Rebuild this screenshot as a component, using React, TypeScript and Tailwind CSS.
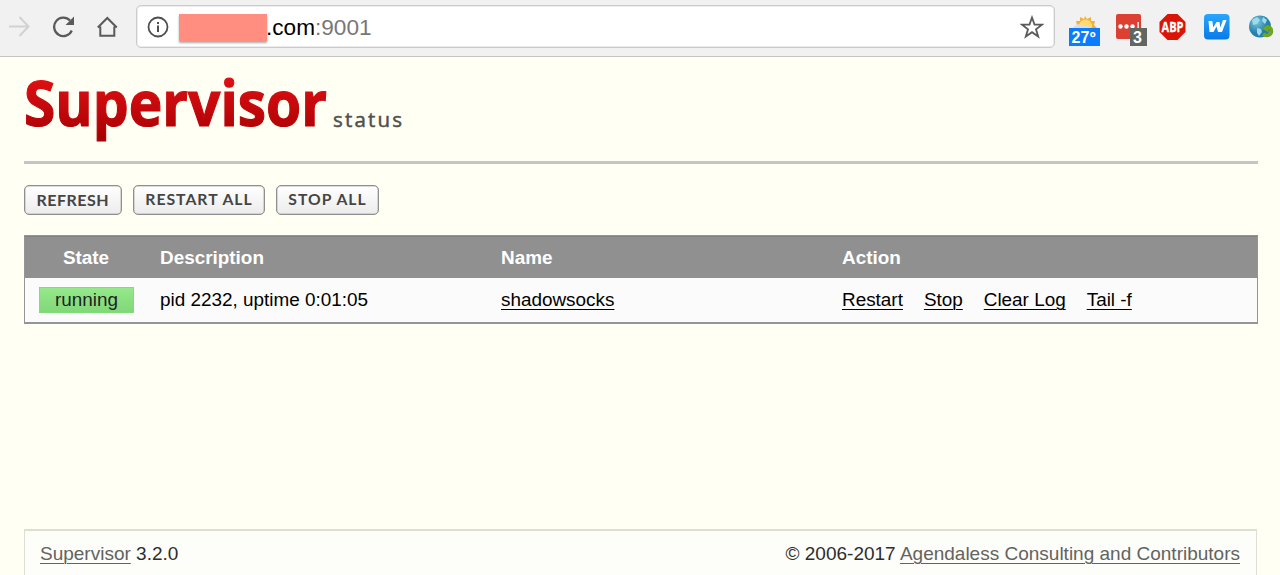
import React from "react";

const nav = "h-6 shrink-0";

function Toolbar() {
  return (
    <header className="flex h-[57px] shrink-0 items-start border-b border-[#c4c4c4] bg-[#f1f1f1]">
      <div className="flex w-[136px] shrink-0 pt-[15px]">
        <svg className={`${nav} w-[52px]`} viewBox="0 0 52 24" fill="none" stroke="#d2d2d2" strokeWidth="2">
          <path d="M9 11.500h19M19.500 2l9 9.500-9 9.500" />
        </svg>
        <svg className={`${nav} w-6`} viewBox="0 0 24 24" fill="none">
          <path d="M19.800 15.500A9.200 9.200 0 1 1 18 5.500" stroke="#5a5a5a" strokeWidth="2.200" />
          <path d="M22 1.500v8.500h-8.500z" fill="#5a5a5a" />
        </svg>
        <svg className={`${nav} ml-5 w-6`} viewBox="0 0 24 24" fill="none" stroke="#5a5a5a" strokeWidth="2">
          <path d="M1.800 12.500L11.300 3l9.500 9.500M4.300 11.500v9.300h14v-9.300" />
        </svg>
      </div>
      <div className="mt-[5px] flex h-[43px] w-[919px] shrink-0 items-center rounded-[5px] border border-[#cbcbcb] bg-white pl-[10px] shadow-[inset_0_0_0_0.5px_#dadada]">
        <svg className="size-6 shrink-0" viewBox="0 0 24 24" fill="none">
          <circle cx="11" cy="12" r="9.500" stroke="#4e4e4e" strokeWidth="1.800" />
          <path d="M11 10.500V17M11 7v2" stroke="#4e4e4e" strokeWidth="2" />
        </svg>
        <span className="mt-[2px] ml-[8px] h-[27px] w-[88px] shrink-0 bg-[#ff8d80] shadow-[0_2px_2px_#aaa]" />
        <span className="-ml-px pt-[2px] font-['Liberation_Sans',Arial,sans-serif] text-[22.6px] leading-[30px] text-black">
          .com<span className="text-[#777]">:9001</span>
        </span>
        <svg className="mr-[10px] ml-auto size-6 shrink-0" viewBox="0 0 24 24" fill="none" stroke="#5a5a5a" strokeWidth="1.800">
          <path d="M12 2.500l2.500 7 7.500.2-6 4.600 2.200 7.200L12 17.200 5.800 21.500 8 14.300 2 9.700l7.500-.2z" />
        </svg>
      </div>
      <Extensions />
    </header>
  );
}

function Extensions() {
  return (
    <svg className="h-14 w-[225px] shrink-0 font-['Liberation_Sans',Arial,sans-serif]" viewBox="1055 0 225 56">
      <defs>
        <linearGradient id="blue" x2="0" y2="1">
          <stop stopColor="#28a6ff" />
          <stop offset="1" stopColor="#087ae8" />
        </linearGradient>
        <radialGradient id="globe" cx=".35" cy=".3">
          <stop stopColor="#7cc5de" />
          <stop offset="1" stopColor="#267fab" />
        </radialGradient>
      </defs>
      <path d="M1085 16l2 3 4-2 0 4 4 0-1 4 3 3h-24l4-3-1-4 4 0 0-4 4 2z" fill="#f2b03c" />
      <circle cx="1085.500" cy="26" r="6.500" fill="#ffdc72" />
      <path d="M1074 29c0-5 6-6 8-3 4-2 7 0 7 3z" fill="#ddd" />
      <path d="M1069 28h31v18h-31z" fill="#0b7cff" />
      <text x="1071.500" y="43" fontSize="16" fontWeight="700" fill="#fff" textLength="24">27º</text>
      <rect x="1116" y="14" width="25" height="25" rx="2" fill="#dc4032" />
      <g fill="#fff">
        <circle cx="1120.500" cy="26.500" r="2.200" />
        <circle cx="1126.500" cy="26.500" r="2.200" />
        <circle cx="1132.500" cy="26.500" r="2.200" />
        <path d="M1137.500 22h1.300v7h-1.300z" />
      </g>
      <path d="M1130 28h17v18h-17z" fill="#626661" />
      <text x="1133" y="43" fontSize="16" fontWeight="700" fill="#fff">3</text>
      <path d="M1167.500 14h10l8 8v10l-8 8h-10l-8-8V22z" fill="#db1505" />
      <text x="1161.500" y="32" fontSize="14" fontWeight="700" fill="#fff" stroke="#fff" strokeWidth=".3" textLength="22" lengthAdjust="spacingAndGlyphs" className="font-['Open_Sans',sans-serif]">ABP</text>
      <rect x="1204" y="14" width="25.500" height="25.500" rx="4" fill="url(#blue)" />
      <path d="M1208.500 21h3.800l1 6.500 3.200-5.500h3l.8 5.500 2.700-7.500h3.500l-4.500 12h-4l-1.500-5.500-3 5.500h-4z" fill="#fff" />
      <circle cx="1260" cy="26.500" r="11" fill="url(#globe)" />
      <path d="M1252 20l5-3 3 3-3 4-4 1zm11-3l4 3-2 4-3-3zm-6 11l4 1 1 3-3 4-2-3z" fill="#9bdbea" />
      <path d="M1263 34c4 3 8.500 1 8.500-3 0-3-2-4-4.500-3.500" fill="none" stroke="#72a51e" strokeWidth="3.500" />
      <path d="M1262 28.500l6.500-4v8z" fill="#72a51e" />
    </svg>
  );
}

function Logo() {
  return (
    <svg className="block h-[104px] w-[400px]" viewBox="24 57 400 104" role="img">
      <defs>
        <linearGradient id="red" gradientUnits="userSpaceOnUse" x1="0" y1="80" x2="0" y2="138">
          <stop stopColor="#dc1012" />
          <stop offset="1" stopColor="#a90004" />
        </linearGradient>
      </defs>
      <text x="24" y="125.500" fontSize="62.500" fontWeight="700" fill="url(#red)" stroke="url(#red)" strokeWidth="1.200" textLength="303" lengthAdjust="spacingAndGlyphs" className="font-['Open_Sans','Noto_Sans',sans-serif]">Supervisor</text>
      <text x="333" y="127" fontSize="20.500" fill="#50504c" stroke="#50504c" strokeWidth=".5" textLength="69" className="font-['Open_Sans','Noto_Sans',sans-serif]">status</text>
    </svg>
  );
}

function ActionButton({ label, box, width }: { label: string; box: string; width: number }) {
  return (
    <button className={`flex h-[30px] items-center justify-center rounded-[5px] border-[1.5px] border-[#8f8f8d] bg-linear-to-b from-white to-[#ececec] shadow-[inset_0_0_0_0.5px_#b5b5b3] ${box}`}>
      <svg className="h-5 w-full" viewBox={`0 0 ${width + 24} 20`}>
        <text x="11.500" y="15.500" fontSize="16" fontWeight="700" fill="#454543" textLength={width} className="font-[Lato,sans-serif]">{label}</text>
      </svg>
    </button>
  );
}

const columns = "grid grid-cols-[120px_341px_341px_1fr] items-center px-[15px]";
const link = "underline decoration-1 underline-offset-[3px]";

export default function App() {
  return (
    <div className="flex h-[575px] w-[1280px] flex-col overflow-hidden bg-[#fffff3] font-['Liberation_Sans',Arial,sans-serif] text-[18.9px] leading-6 text-[#111]">
      <Toolbar />
      <main className="flex min-h-0 flex-1 flex-col pr-[22px] pl-6">
        <div className="h-[107px] shrink-0 border-b-3 border-[#c5c5c5]">
          <Logo />
        </div>
        <div className="mt-[21px] flex shrink-0 gap-[11px]">
          <ActionButton label="REFRESH" box="w-[98px]" width={72} />
          <ActionButton label="RESTART ALL" box="w-[132px]" width={108} />
          <ActionButton label="STOP ALL" box="w-[103px]" width={79} />
        </div>
        <section className="mt-5 h-[89px] shrink-0 border border-b-2 border-[#959595] bg-[#fbfbfb]">
          <div className={`${columns} h-[42px] border-t border-[#828282] bg-[#909090] font-bold text-white`}>
            <span className="-ml-px w-[94px] text-center">State</span>
            <span>Description</span>
            <span>Name</span>
            <span>Action</span>
          </div>
          <div className={`${columns} h-[44px] text-black`}>
            <span className="-ml-px h-[26px] w-[95px] border border-[#82dc79] bg-linear-to-b from-[#94e98b] to-[#81d878] text-center text-[#222]">running</span>
            <span>pid 2232, uptime 0:01:05</span>
            <a className={link}>shadowsocks</a>
            <span className="flex gap-[21px]">
              <a className={link}>Restart</a>
              <a className={link}>Stop</a>
              <a className={link}>Clear Log</a>
              <a className={link}>Tail -f</a>
            </span>
          </div>
        </section>
        <footer className="mt-auto mr-px flex h-[46px] shrink-0 justify-between border border-t-2 border-b-0 border-[#deded5] bg-[#fdfef9] pt-[11px] pr-4 pl-[15px] text-[19px] text-[#2d2d2b]">
          <span><a className={`text-[#63635f] ${link}`}>Supervisor</a> 3.2.0</span>
          <span>© 2006-2017 <a className={`text-[#63635f] ${link}`}>Agendaless Consulting and Contributors</a></span>
        </footer>
      </main>
    </div>
  );
}
